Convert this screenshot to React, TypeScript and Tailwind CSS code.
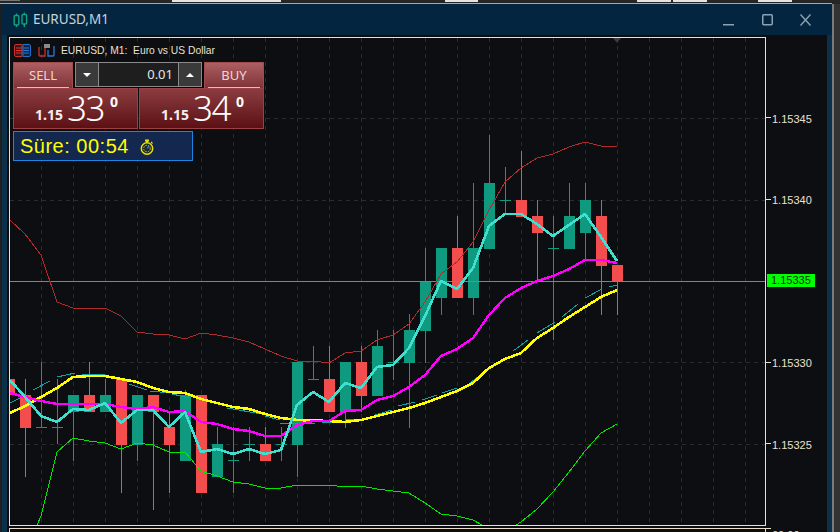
import React from 'react'

type Candle = { x: number; top: number; bottom: number; high: number; low: number; up: boolean }

const UP = '#0f9a80'
const DOWN = '#f44d4d'

// x, body top, body bottom, wick high, wick low
const candles: Candle[] = [
  { x: 9, top: 379, bottom: 395, high: 379, low: 395, up: false },
  { x: 25, top: 395, bottom: 428, high: 379, low: 477, up: false },
  { x: 41, top: 427, bottom: 428, high: 362, low: 428, up: true },
  { x: 57, top: 427, bottom: 428, high: 379, low: 444, up: true },
  { x: 73, top: 395, bottom: 412, high: 395, low: 461, up: true },
  { x: 89, top: 395, bottom: 412, high: 362, low: 412, up: false },
  { x: 105, top: 395, bottom: 412, high: 379, low: 412, up: true },
  { x: 121, top: 379, bottom: 445, high: 379, low: 493, up: false },
  { x: 137, top: 395, bottom: 445, high: 395, low: 461, up: true },
  { x: 153, top: 395, bottom: 412, high: 395, low: 510, up: false },
  { x: 169, top: 427, bottom: 445, high: 411, low: 493, up: false },
  { x: 185, top: 395, bottom: 461, high: 390, low: 461, up: true },
  { x: 201, top: 395, bottom: 493, high: 395, low: 493, up: false },
  { x: 217, top: 444, bottom: 477, high: 427, low: 477, up: true },
  { x: 233, top: 460, bottom: 461, high: 427, low: 493, up: true },
  { x: 249, top: 444, bottom: 445, high: 427, low: 461, up: true },
  { x: 265, top: 444, bottom: 461, high: 427, low: 461, up: false },
  { x: 281, top: 444, bottom: 445, high: 427, low: 461, up: true },
  { x: 297, top: 362, bottom: 445, high: 362, low: 477, up: true },
  { x: 313, top: 379, bottom: 380, high: 346, low: 380, up: true },
  { x: 329, top: 379, bottom: 412, high: 346, low: 412, up: false },
  { x: 345, top: 362, bottom: 412, high: 362, low: 428, up: true },
  { x: 361, top: 362, bottom: 396, high: 346, low: 412, up: false },
  { x: 377, top: 346, bottom: 396, high: 330, low: 396, up: true },
  { x: 393, top: 362, bottom: 363, high: 330, low: 380, up: true },
  { x: 409, top: 330, bottom: 363, high: 314, low: 428, up: true },
  { x: 425, top: 281, bottom: 331, high: 248, low: 363, up: true },
  { x: 441, top: 248, bottom: 298, high: 248, low: 315, up: true },
  { x: 457, top: 248, bottom: 298, high: 216, low: 298, up: false },
  { x: 473, top: 248, bottom: 298, high: 183, low: 315, up: true },
  { x: 489, top: 183, bottom: 249, high: 135, low: 249, up: true },
  { x: 505, top: 200, bottom: 201, high: 167, low: 214, up: true },
  { x: 521, top: 200, bottom: 217, high: 151, low: 217, up: false },
  { x: 537, top: 216, bottom: 233, high: 200, low: 281, up: false },
  { x: 553, top: 248, bottom: 249, high: 216, low: 340, up: true },
  { x: 569, top: 216, bottom: 249, high: 183, low: 249, up: true },
  { x: 585, top: 200, bottom: 233, high: 183, low: 260, up: true },
  { x: 601, top: 216, bottom: 266, high: 200, low: 315, up: false },
  { x: 617, top: 265, bottom: 281, high: 265, low: 315, up: false },
]

const upperBand =
  '10,220 25,234 41,255 57,302 73,308 105,308 121,316 137,332 153,334 169,335 185,339 201,333 217,335 233,338 249,342 265,349 281,356 297,361 313,361 329,363 345,353 361,351 377,340 393,335 409,324 425,302 441,274 457,262 473,242 489,210 505,182 521,168 537,158 553,154 569,147 585,142 601,146 617,146'
const lowerBand =
  '37,525 41,516 57,452 73,438 89,441 105,443 121,449 137,443 153,445 169,452 185,452 201,471 217,476 233,482 249,484 265,488 281,488 297,485 329,485 345,487 361,486 377,489 393,491 409,493 425,503 441,514 457,516 473,520 482,525'
const lowerBand2 = '516,525 521,522 537,509 553,492 569,472 585,451 601,433 617,424'
const yellow =
  '10,413 25,406 41,397 57,388 73,377 89,376 105,376 121,379 137,382 153,388 169,392 185,393 201,399 217,403 233,407 249,409 265,414 281,418 297,420 329,421 345,422 361,420 377,416 393,412 409,408 425,403 441,397 457,391 473,383 489,368 505,359 521,353 537,338 553,328 569,317 585,307 601,297 617,290'
const magenta =
  '10,393 25,397 41,401 57,404 105,404 121,407 137,409 153,407 169,412 185,411 201,422 217,424 233,429 249,431 265,436 281,436 297,425 313,421 329,421 345,411 361,410 377,400 393,396 409,387 425,375 441,356 457,349 473,338 489,315 505,298 521,288 537,281 553,276 569,269 585,260 601,260 617,263'
const cyan =
  '10,380 25,397 41,416 57,422 73,409 89,410 105,403 121,423 137,410 153,410 169,427 185,412 201,452 217,449 233,454 249,449 265,454 281,450 297,405 313,392 329,402 345,383 361,388 377,367 393,365 409,348 425,316 441,281 457,289 473,268 489,226 505,214 521,214 537,224 553,236 569,225 585,214 601,237 617,261'
const tealBits = [
  '10,403 20,398',
  '33,390 50,381',
  '57,377 75,373',
  '82,374 105,375',
  '117,378 128,380',
  '129,384 147,390',
  '150,391 170,393',
  '172,394 190,398',
  '227,408 262,414',
  '265,416 280,420',
  '280,423 315,423',
  '322,423 338,422',
  '345,420 363,419',
  '375,415 392,410',
  '398,406 415,402',
  '422,400 437,395',
  '442,393 457,388',
  '470,383 483,373',
  '490,367 507,357',
  '513,351 528,340',
  '537,333 555,322',
  '562,317 578,304',
  '585,298 602,289',
  '609,287 617,285',
]

const gridXs = Array.from({ length: 23 }, (_, i) => 41 + i * 32)
const gridYs = [118, 200, 362, 444]

function ChartDrawing() {
  return (
    <svg className="absolute inset-0 w-full h-full" viewBox="10 38 755 487" preserveAspectRatio="none">
      <g stroke="#2a2c30" strokeWidth="1" strokeDasharray="4 4" shapeRendering="crispEdges">
        {gridXs.map((x) => (
          <line key={x} x1={x + 0.5} x2={x + 0.5} y1="38" y2="525" />
        ))}
        {gridYs.map((y) => (
          <line key={y} x1="10" x2="765" y1={y + 0.5} y2={y + 0.5} />
        ))}
      </g>
      <polygon points="613,38 621,38 617,43" fill="#3a3c40" />
      <g shapeRendering="crispEdges">
        {candles.map((c) => {
          const fill = c.up ? UP : DOWN
          return (
            <g key={c.x} fill={fill}>
              <rect x={c.x} y={c.high} width="1" height={c.low - c.high} />
              <rect x={c.x - 5} y={c.top} width="11" height={c.bottom - c.top} />
            </g>
          )
        })}
      </g>
      <line x1="10" x2="765" y1="281.5" y2="281.5" stroke="#00e000" strokeWidth="1.4" shapeRendering="crispEdges" />
      <g fill="none" strokeLinejoin="round" shapeRendering="crispEdges">
        <polyline points={upperBand} stroke="#b02c2c" strokeWidth="1" />
        <polyline points={lowerBand} stroke="#00e800" strokeWidth="1" />
        <polyline points={lowerBand2} stroke="#00e800" strokeWidth="1" />
        {tealBits.map((p) => (
          <polyline key={p} points={p} stroke="#12a0a0" strokeWidth="1" />
        ))}
        <polyline points={yellow} stroke="#ffff00" strokeWidth="2.6" />
        <polyline points={magenta} stroke="#ff00ff" strokeWidth="2.4" />
        <polyline points={cyan} stroke="#40e0d0" strokeWidth="2.6" />
      </g>
    </svg>
  )
}

function CandleIcon() {
  return (
    <svg width="15" height="16" viewBox="0 0 15 16" fill="none" stroke="#12a37f" strokeWidth="1.4">
      <rect x="1.2" y="3.5" width="4.6" height="9.5" rx="1" />
      <path d="M3.5 1.5v2M3.5 13v2" />
      <rect x="9" y="2.5" width="4.6" height="9.5" rx="1" />
      <path d="M11.3 .5v2M11.3 12v3" />
    </svg>
  )
}

function LegendIcons() {
  return (
    <div className="flex items-center gap-[7px]">
      <svg width="17" height="13" viewBox="0 0 17 13">
        <path d="M8 .5H2A1.5 1.5 0 0 0 .5 2v9A1.5 1.5 0 0 0 2 12.500h6z" fill="#3a1416" stroke="#c8322e" />
        <path d="M9 .5h6A1.500 1.500 0 0 1 16.500 2v9a1.500 1.500 0 0 1-1.500 1.500H9z" fill="#10233f" stroke="#2470c8" />
        <path d="M2 4h6M2 6.500h6M2 9h6" stroke="#d8382f" />
        <path d="M9.500 4H15M9.500 6.500H15M9.500 9H15" stroke="#2a7ad8" />
      </svg>
      <svg width="17" height="13" viewBox="0 0 17 13" fill="none">
        <path d="M1 3v8a1 1 0 0 0 1 1h5V4" stroke="#c8322e" strokeWidth="1.300" />
        <path d="M10 6v6h5a1 1 0 0 0 1-1V2" stroke="#2a7ad8" strokeWidth="1.300" />
        <rect x="6" y="0" width="6" height="4" fill="#8a8a8a" />
      </svg>
    </div>
  )
}

function Stopwatch() {
  return (
    <svg width="14" height="16" viewBox="0 0 14 16" className="mt-[2px]">
      <rect x="5" y="0.500" width="4" height="2" fill="#e8e000" />
      <rect x="6" y="2" width="2" height="2" fill="#e8e000" />
      <path d="M11 3l1.500 1.500" stroke="#e8e000" strokeWidth="1.200" />
      <circle cx="7" cy="9.500" r="5.700" fill="#1c2a30" stroke="#e8e000" strokeWidth="1.500" />
      <circle cx="7" cy="9.500" r="3.300" fill="none" stroke="#d8c800" strokeWidth="1" strokeDasharray="1.500 1.200" />
      <path d="M7 9.500l2-2.500" stroke="#3f8fe0" strokeWidth="1.200" />
    </svg>
  )
}

function PriceButton({ big }: { big: string }) {
  return (
    <div className="w-[125px] h-[41px] flex items-end justify-center gap-[4px] pb-[3px] pl-[2px] border border-[#9c4043] bg-gradient-to-b from-[#8c3c40] to-[#5c1014] text-white font-['Noto_Sans',sans-serif]">
      <span className="text-[14px] font-bold leading-[20px] text-[#f3eeee]">1.15</span>
      <span className="text-[35px] leading-[35px] font-light tracking-[-1.5px]">{big}</span>
      <span className="self-start text-[14px] font-bold leading-[14px] mt-[6px] ml-[2px]">0</span>
    </div>
  )
}

function SideButton({ label }: { label: string }) {
  return (
    <div className="w-[60px] h-[26px] flex items-center justify-center relative border border-[#a04c4e] border-b-0 bg-gradient-to-b from-[#ad5f62] to-[#7e3337] text-[13px] text-[#ecd6d6] font-['Noto_Sans',sans-serif]">
      {label}
      <div className="absolute left-[3px] right-[3px] bottom-0 h-px bg-[#ecb8b8]" />
    </div>
  )
}

function TradePanel() {
  return (
    <div className="absolute left-[3px] top-[24px] flex flex-col w-[252px]">
      <div className="flex items-start">
        <SideButton label="SELL" />
        <div className="w-[131px] h-[26px] bg-[#050505] px-[2px] pb-px">
          <div className="h-full flex border border-[#8a8a8a] bg-[#3a3a3a] text-white">
            <div className="w-[23px] flex items-center justify-center border-r border-[#8a8a8a]">
              <div className="w-0 h-0 border-x-[4px] border-x-transparent border-t-[4px] border-t-white" />
            </div>
            <div className="flex-1 bg-[#1e1e1e] flex items-center justify-end pr-[5px] text-[13px] text-[#e6e6e6] font-['Noto_Sans',sans-serif]">
              0.01
            </div>
            <div className="w-[23px] flex items-center justify-center border-l border-[#8a8a8a]">
              <div className="w-0 h-0 border-x-[4px] border-x-transparent border-b-[4px] border-b-white" />
            </div>
          </div>
        </div>
        <SideButton label="BUY" />
      </div>
      <div className="flex gap-[1px]">
        <PriceButton big="33" />
        <PriceButton big="34" />
      </div>
      <div className="mt-[2px] w-[180px] h-[30px] flex items-center gap-[11px] pl-[6px] pb-px border border-[#1f86e0] bg-[#14274f] text-[#ffff00] text-[20px] font-['Liberation_Sans',sans-serif] tracking-[0.5px]">
        <span>Süre: 00:54</span>
        <Stopwatch />
      </div>
    </div>
  )
}

function AxisRow({ label }: { label: string }) {
  return (
    <div className="h-[81.5px] flex items-center">
      <div className="w-[5px] h-px bg-[#ece0cc]" />
      <span className="ml-px mt-[2px]">{label}</span>
    </div>
  )
}

export default function App() {
  return (
    <div className="w-[840px] h-[532px] flex flex-col overflow-hidden bg-[#262626]">
      <div className="h-[3px] flex items-start">
        <div className="ml-0 w-[20px] h-px bg-[#777]" />
        <div className="ml-[152px] w-[109px] h-[2px] bg-[#e4e4e4]" />
        <div className="ml-[164px] w-[33px] h-[2px] bg-[#e4e4e4]" />
        <div className="ml-[159px] w-[34px] h-[2px] bg-[#e4e4e4]" />
        <div className="ml-[2px] w-[34px] h-[2px] bg-[#e4e4e4]" />
        <div className="ml-[51px] w-[34px] h-[2px] bg-[#e4e4e4]" />
      </div>
      <div className="h-px w-[832px] bg-[#a8a8a8]" />
      <div className="flex-1 flex min-h-0">
        <div className="w-[2px] bg-[#1e1e1e]" />
        <div className="w-[830px] flex flex-col bg-[#0b3049]">
          <div className="h-[31px] flex items-center bg-[#04253f] pl-[11px] text-[#c6d3dc]">
            <CandleIcon />
            <span className="ml-[5px] text-[13.500px] font-['Noto_Sans',sans-serif]">EURUSD,M1</span>
            <div className="ml-auto flex items-center gap-[27px] pr-[21px]">
              <svg width="11" height="12" viewBox="0 0 11 12" className="mr-px">
                <rect x="0" y="10" width="11" height="1.500" fill="#8da3b3" />
              </svg>
              <svg width="11" height="12" viewBox="0 0 11 12" fill="none" stroke="#8da3b3" strokeWidth="1.500">
                <rect x=".75" y=".75" width="9.500" height="10" rx="1" />
              </svg>
              <svg width="11" height="12" viewBox="0 0 11 12" fill="none" stroke="#8da3b3" strokeWidth="1.400">
                <path d="M.5 .5l10 11M10.500 .5l-10 11" />
              </svg>
            </div>
          </div>
          <div className="flex-1 flex mx-[5px] bg-[#0c0e12] min-h-0">
            <div className="w-[759px] pl-[2px] pt-[2px] flex flex-col">
              <div className="relative w-[757px] h-[489px] border border-[#ece0cc] overflow-hidden">
                <ChartDrawing />
                <div className="absolute left-[4px] top-[5px] flex items-center gap-[6px] text-[10.300px] text-[#ece0cc] font-['Liberation_Sans',sans-serif]">
                  <LegendIcons />
                  <span className="whitespace-pre">EURUSD, M1:  Euro vs US Dollar</span>
                </div>
                <TradePanel />
              </div>
              <div className="mt-[2px] flex-1 border-t border-x border-[#ece0cc]" />
            </div>
            <div className="flex-1 pt-[42px] text-[11px] leading-[12px] text-[#ece0cc] font-['Liberation_Sans',sans-serif]">
              <AxisRow label="1.15345" />
              <AxisRow label="1.15340" />
              <div className="h-[81.5px] flex items-center">
                <div className="ml-px w-[48px] h-[13px] bg-[#00ff00] text-[#0a2a0a] pl-[4px] leading-[13px]">1.15335</div>
              </div>
              <AxisRow label="1.15330" />
              <AxisRow label="1.15325" />
              <div className="mt-[43px] flex items-start">
                <div className="w-[5px] h-px bg-[#ece0cc]" />
                <span className="ml-px mt-[1px]">60.00</span>
              </div>
            </div>
          </div>
        </div>
        <div className="w-[2px] bg-[#7a7a7a]" />
        <div className="flex-1 bg-[#333333]" />
      </div>
    </div>
  )
}
